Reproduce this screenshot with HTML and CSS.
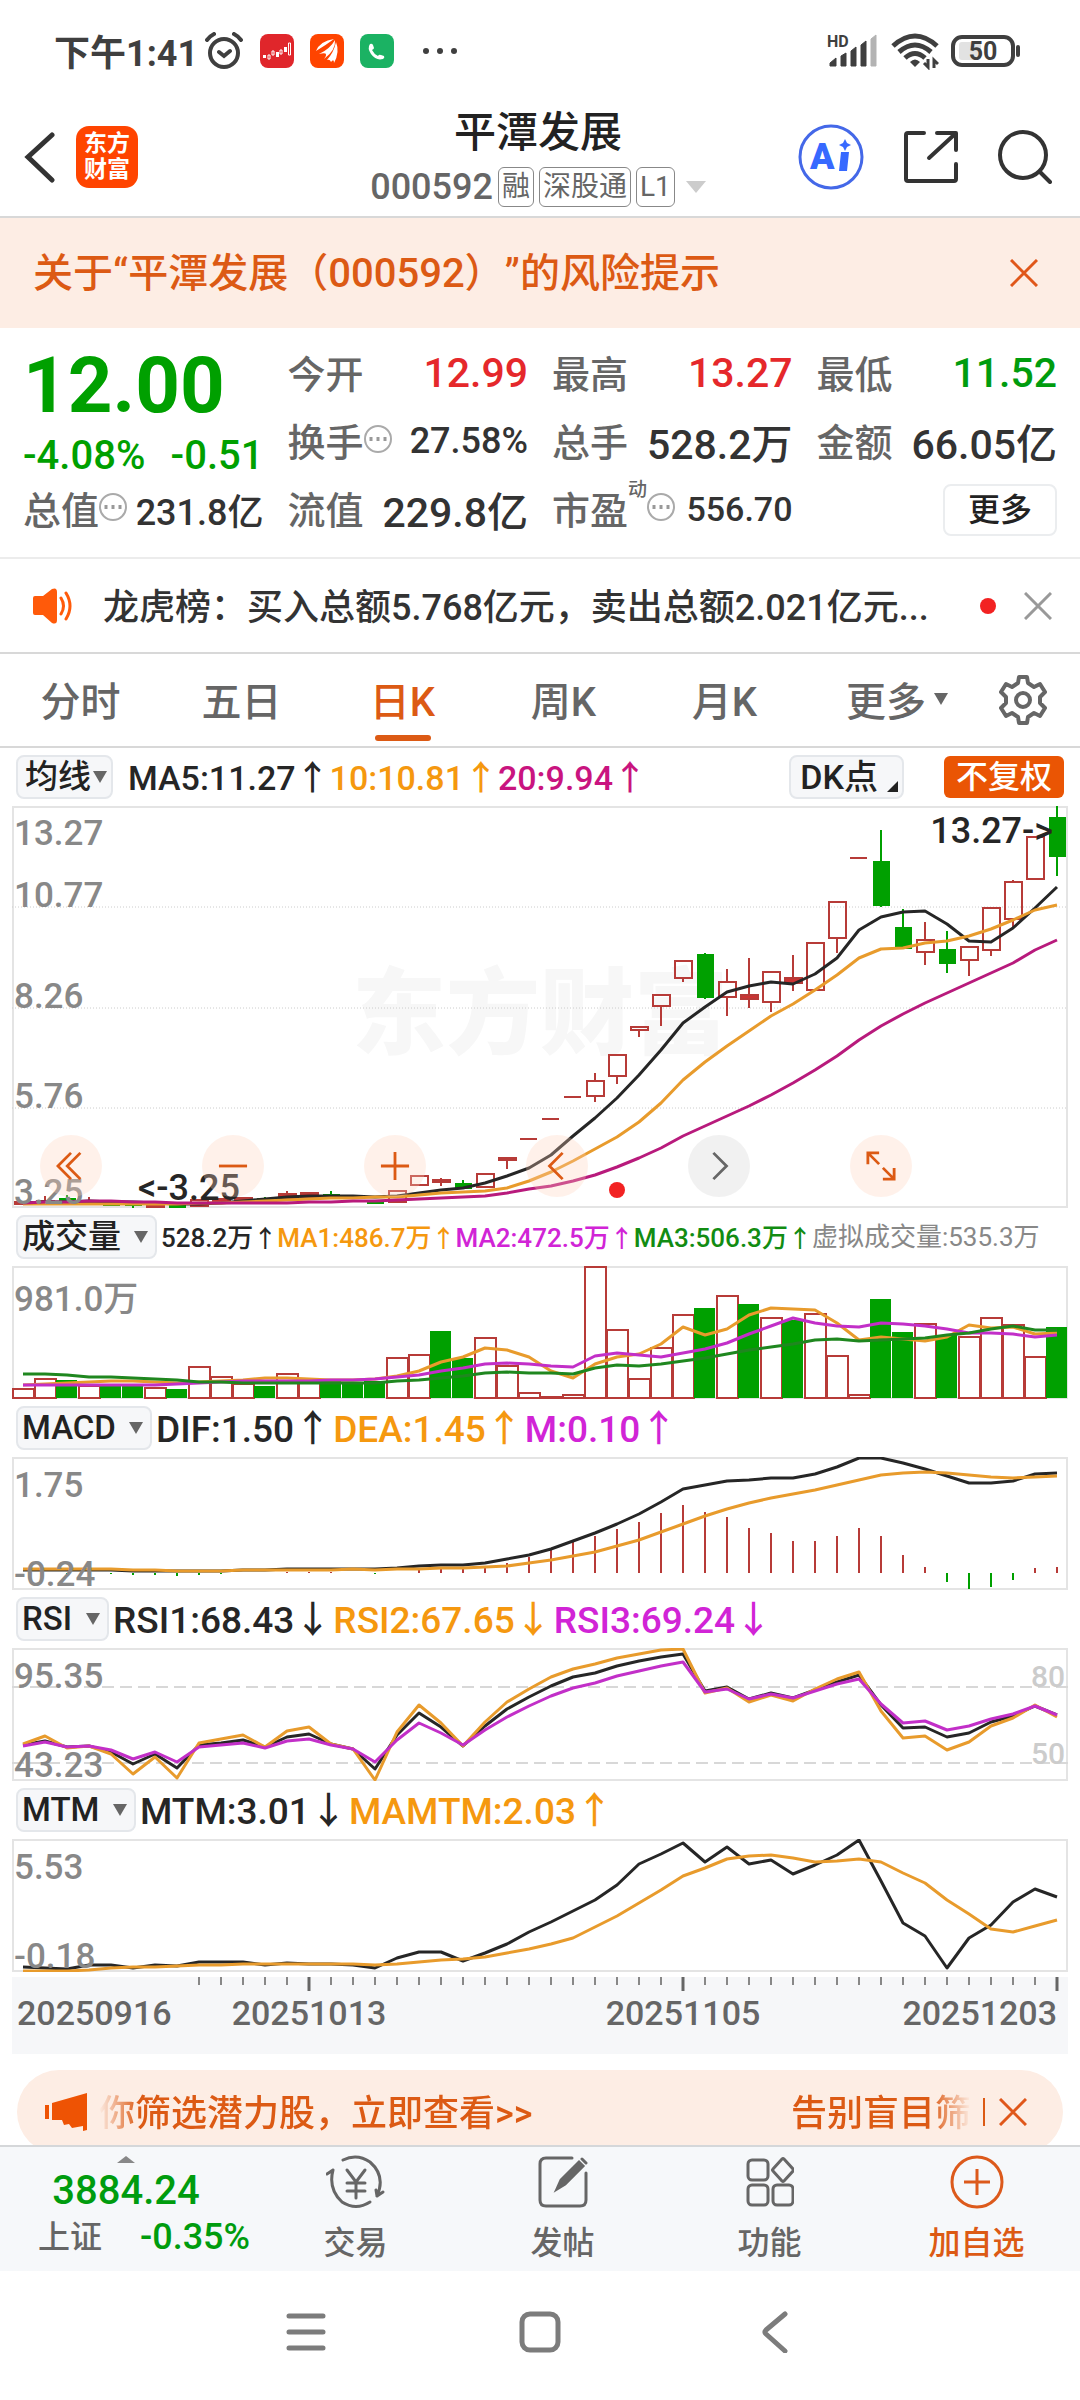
FILE: index.html
```html
<!DOCTYPE html>
<html lang="zh-CN">
<head>
    <meta charset="UTF-8">
    <meta name="viewport" content="width=device-width, initial-scale=1.0">
    <title>平潭发展 000592</title>
    <link rel="stylesheet" href="styles.css">
</head>
<body>
    <div class="status-bar">
        <div class="status-left">
            <span class="clock">下午1:41</span>
            <svg width="40" height="38" viewBox="0 0 40 38" fill="none" stroke="#3f3f3f" stroke-width="4" stroke-linecap="round">
                <circle cx="20" cy="21" r="14"/>
                <path d="M15 20l5 4 6-5M3 8q3-4 7-6M37 8q-3-4-7-6"/>
            </svg>
            <svg class="app-icon" width="34" height="34" viewBox="0 0 34 34">
                <rect width="34" height="34" rx="8" fill="#e0262b"/>
                <path d="M3 21h3v3H3zM16 18h3v5h-3zM24 13h3v5h-3z" fill="#fff"/>
                <path d="M8 21h2v4H8zM12 17h2v4h-2zM20 16h2v4h-2zM28.500 9h2v12h-2z" fill="none" stroke="#fff"/>
            </svg>
            <svg class="app-icon" width="34" height="34" viewBox="0 0 34 34">
                <rect width="34" height="34" rx="8" fill="#ff4400"/>
                <path d="M6 17Q10 7 24 5Q16 11 6 17zM9 20Q20 15 25 6Q26 16 14 25Q20 17 9 20zM17 26Q24 18 26 8Q30 18 24 29Q24 24 21 28Q20 25 17 26z" fill="#fff"/>
            </svg>
            <svg class="app-icon" width="34" height="34" viewBox="0 0 34 34">
                <rect width="34" height="34" rx="8" fill="#1bb263"/>
                <path d="M10 10q2-1 3 1l1 3q0 1-2 2q2 4 6 6q1-2 3-1l3 1q1 2-1 3q-7 2-12-5q-4-6-1-10z" fill="#fff"/>
            </svg>
            <svg class="dots" width="36" height="8" viewBox="0 0 36 8" fill="#3f3f3f">
                <circle cx="4" cy="4" r="3"/><circle cx="18" cy="4" r="3"/><circle cx="32" cy="4" r="3"/>
            </svg>
        </div>
        <div class="status-right">
            <svg width="52" height="36" viewBox="0 0 52 36" fill="#3f3f3f">
                <text class="hd" x="0" y="14">HD</text>
                <path d="M3 33v-3l6-5v8zM14 33V23l5-3v13zM24 33V18l5-4v19zM34 33V12l5-4v25z" stroke="#3f3f3f" stroke-linejoin="round"/>
                <path d="M44 33V6l5-4v31z" fill="#b3b3b3" stroke="#b3b3b3" stroke-linejoin="round"/>
            </svg>
            <svg width="48" height="38" viewBox="0 0 48 38" fill="none" stroke="#3f3f3f" stroke-width="5">
                <path d="M2 14Q24-6 46 14M8 20Q24 6 40 20M14 26Q24 17 34 26"/>
                <path d="M19 30q5-5 10 0l-5 5z" fill="#3f3f3f" stroke="none"/>
                <path d="M37 27v8l-4-4M43 36v-8l4 4" stroke-width="3"/>
            </svg>
            <svg width="70" height="32" viewBox="0 0 70 32" fill="none" stroke="#3f3f3f">
                <rect x="8" y="7" width="22" height="18" rx="3" fill="#e2e2e2" stroke="none"/>
                <rect x="2" y="2" width="60" height="28" rx="9" stroke-width="4"/>
                <path d="M67 12v8" stroke-width="4" stroke-linecap="round"/>
                <text class="battery" x="32" y="25">50</text>
            </svg>
        </div>
    </div>

    <header class="header">
        <div class="header-side">
            <a href="#" aria-label="返回">
                <svg width="32" height="52" viewBox="0 0 32 52" fill="none" stroke="#333" stroke-width="5" stroke-linecap="round"><path d="M28 4L4 26l24 23"/></svg>
            </a>
            <a class="logo" href="#"><span>东方</span><span>财富</span></a>
        </div>
        <div class="header-title">
            <h1>平潭发展</h1>
            <div class="code-row">
                <span class="code">000592</span>
                <span class="tag">融</span>
                <span class="tag">深股通</span>
                <span class="tag">L1</span>
                <span class="triangle light"></span>
            </div>
        </div>
        <div class="header-side header-right">
            <a href="#" aria-label="AI">
                <svg width="66" height="66" viewBox="0 0 66 66">
                    <circle cx="33" cy="33" r="31" fill="none" stroke="#4468e8" stroke-width="3"/>
                    <text class="ai" x="12" y="45">A</text>
                    <path d="M43 28h8l-2 19h-8zM47 15l2 4 4 2-4 2-2 4-2-4-4-2 4-2z" fill="#3769ff"/>
                </svg>
            </a>
            <a href="#" aria-label="分享">
                <svg width="54" height="54" viewBox="0 0 54 54" fill="none" stroke="#333" stroke-width="4" stroke-linecap="round" stroke-linejoin="round"><path d="M20 3H4q-2 0-2 2v44q0 2 2 2h46q2 0 2-2V34M33 3h19v17M51 4L25 28"/></svg>
            </a>
            <a href="#" aria-label="搜索">
                <svg width="54" height="54" viewBox="0 0 54 54" fill="none" stroke="#333" stroke-width="4" stroke-linecap="round"><circle cx="25" cy="25" r="23"/><path d="M42 42l10 10"/></svg>
            </a>
        </div>
    </header>

    <div class="risk-banner">
        <a href="#">关于“平潭发展（000592）”的风险提示</a>
        <button class="close" aria-label="关闭"><svg width="28" height="28" viewBox="0 0 28 28" fill="none" stroke="#e0571a" stroke-width="3"><path d="M1 1l26 26M27 1L1 27"/></svg></button>
    </div>

    <section class="quote">
        <div class="price-block">
            <strong class="price">12.00</strong>
            <div class="change"><span>-4.08%</span><span>-0.51</span></div>
        </div>
        <div class="stat"><span class="name">今开</span><span class="value up">12.99</span></div>
        <div class="stat"><span class="name">最高</span><span class="value up">13.27</span></div>
        <div class="stat"><span class="name">最低</span><span class="value down">11.52</span></div>
        <div class="stat"><span class="name">换手<i class="info"></i></span><span class="value small">27.58%</span></div>
        <div class="stat"><span class="name">总手</span><span class="value">528.2万</span></div>
        <div class="stat"><span class="name">金额</span><span class="value">66.05亿</span></div>
        <div class="stat"><span class="name">总值<i class="info"></i></span><span class="value small">231.8亿</span></div>
        <div class="stat"><span class="name">流值</span><span class="value">229.8亿</span></div>
        <div class="stat"><span class="name">市盈<sup>动</sup><i class="info"></i></span><span class="value tiny">556.70</span></div>
        <button class="more-btn">更多</button>
    </section>

    <div class="notice">
        <svg width="44" height="36" viewBox="0 0 44 36" fill="#ff5a0a">
            <path d="M2 10q0-2 2-2h8L21 1q5-2 5 3v28q0 5-5 3l-9-8H4q-2 0-2-2z"/>
            <path d="M30 10q5 8 0 16M35 5q8 13 0 26" fill="none" stroke="#ff5a0a" stroke-width="3" stroke-linecap="round"/>
        </svg>
        <a href="#">龙虎榜：买入总额5.768亿元，卖出总额2.021亿元...</a>
        <span class="red-dot"></span>
        <button class="close" aria-label="关闭"><svg width="28" height="28" viewBox="0 0 28 28" fill="none" stroke="#999" stroke-width="3"><path d="M1 1l26 26M27 1L1 27"/></svg></button>
    </div>

    <nav class="tabs">
        <a href="#">分时</a>
        <a href="#">五日</a>
        <a class="active" href="#">日K</a>
        <a href="#">周K</a>
        <a href="#">月K</a>
        <a class="more-tab" href="#">更多<span class="triangle tab-arrow"></span></a>
        <button class="gear" aria-label="设置">
            <svg width="48" height="50" viewBox="0 0 48 50" fill="none" stroke="#666" stroke-width="4" stroke-linejoin="round">
                <path d="M20 2h8l1 6 6 4 6-3 5 8-5 5v6l5 5-5 8-6-3-6 4-1 6h-8l-1-6-6-4-6 3-5-8 5-5v-6l-5-5 5-8 6 3 6-4z"/>
                <circle cx="24" cy="25" r="7"/>
            </svg>
        </button>
    </nav>

    <main class="charts">
        <div class="legend">
            <span class="picker tight"><select aria-label="主图指标"><option>均线</option></select></span>
            <div class="values">
                <span class="black">MA5:11.27<i>↑</i></span>
                <span class="orange">10:10.81<i>↑</i></span>
                <span class="pink">20:9.94<i>↑</i></span>
            </div>
            <button class="dk-btn">DK点</button>
            <button class="adjust-btn">不复权</button>
        </div>
        <div class="chart-box">
            <svg class="chart" viewBox="0 0 1056 402">
                <rect class="frame" x="1" y="1" width="1054" height="400"/>
                <text class="watermark" x="528" y="241">东方财富</text>
                <path class="dotted" d="M0 101h1056M0 202h1056M0 302h1056"/>
                <g id="kline"></g>
                <g class="scale">
                    <text x="2" y="39">13.27</text>
                    <text x="2" y="101">10.77</text>
                    <text x="2" y="202">8.26</text>
                    <text x="2" y="302">5.76</text>
                    <text x="2" y="398">3.25</text>
                </g>
                <g class="mark">
                    <text x="126" y="394">&lt;-3.25</text>
                    <text class="end" x="1041" y="37">13.27-&gt;</text>
                </g>
            </svg>
            <div class="chart-tools">
                <button aria-label="最左"><svg viewBox="0 0 32 32"><path d="M16 2L2 16l14 14M26 2L12 16l14 14"/></svg></button>
                <button aria-label="缩小"><svg viewBox="0 0 32 32"><path d="M1 16h30"/></svg></button>
                <button aria-label="放大"><svg viewBox="0 0 32 32"><path d="M1 16h30M16 1v30"/></svg></button>
                <button aria-label="左移"><svg viewBox="0 0 32 32"><path d="M22 2L8 16l14 14"/></svg></button>
                <button class="off" aria-label="右移"><svg viewBox="0 0 32 32"><path d="M10 2l14 14-14 14"/></svg></button>
                <button aria-label="全屏"><svg viewBox="0 0 32 32"><path d="M2 14V2h12M2 2l12 12M30 18v12H18M30 30L18 18"/></svg></button>
            </div>
            <span class="tool-dot red-dot"></span>
        </div>

        <div class="legend">
            <span class="picker"><select aria-label="副图指标一"><option>成交量</option></select></span>
            <div class="values dense">
                <span class="black">528.2万<i>↑</i></span>
                <span class="orange">MA1:486.7万<i>↑</i></span>
                <span class="purple">MA2:472.5万<i>↑</i></span>
                <span class="green">MA3:506.3万<i>↑</i></span>
                <span class="grey">虚拟成交量:535.3万</span>
            </div>
        </div>
        <svg class="chart" viewBox="0 0 1056 133">
            <rect class="frame" x="1" y="1" width="1054" height="131"/>
            <g id="volume"></g>
            <text class="scale" x="2" y="45">981.0万</text>
        </svg>

        <div class="legend">
            <span class="picker"><select aria-label="副图指标二"><option>MACD</option></select></span>
            <div class="values">
                <span class="black">DIF:1.50<i>↑</i></span>
                <span class="orange">DEA:1.45<i>↑</i></span>
                <span class="purple">M:0.10<i>↑</i></span>
            </div>
        </div>
        <svg class="chart" viewBox="0 0 1056 133">
            <rect class="frame" x="1" y="1" width="1054" height="131"/>
            <g id="macd"></g>
            <g class="scale"><text x="2" y="40">1.75</text><text x="2" y="129">-0.24</text></g>
        </svg>

        <div class="legend">
            <span class="picker"><select aria-label="副图指标三"><option>RSI</option></select></span>
            <div class="values">
                <span class="black">RSI1:68.43<i>↓</i></span>
                <span class="orange">RSI2:67.65<i>↓</i></span>
                <span class="purple">RSI3:69.24<i>↓</i></span>
            </div>
        </div>
        <svg class="chart" viewBox="0 0 1056 133">
            <rect class="frame" x="1" y="1" width="1054" height="131"/>
            <path class="dashed" d="M0 39h1056M0 115h1056"/>
            <g class="levels"><text x="1053" y="39">80</text><text x="1053" y="116">50</text></g>
            <g id="rsi"></g>
            <g class="scale"><text x="2" y="40">95.35</text><text x="2" y="129">43.23</text></g>
        </svg>

        <div class="legend">
            <span class="picker"><select aria-label="副图指标四"><option>MTM</option></select></span>
            <div class="values">
                <span class="black">MTM:3.01<i>↓</i></span>
                <span class="orange">MAMTM:2.03<i>↑</i></span>
            </div>
        </div>
        <svg class="chart" viewBox="0 0 1056 133">
            <rect class="frame" x="1" y="1" width="1054" height="131"/>
            <g id="mtm"></g>
            <g class="scale"><text x="2" y="40">5.53</text><text x="2" y="129">-0.18</text></g>
        </svg>

        <svg class="chart axis" viewBox="0 0 1056 77">
            <g id="ticks"></g>
            <text x="5" y="48">20250916</text>
            <text class="middle" x="297" y="48">20251013</text>
            <text class="middle" x="671" y="48">20251105</text>
            <text class="end" x="1045" y="48">20251203</text>
        </svg>
    </main>

    <div class="promo">
        <svg width="42" height="38" viewBox="0 0 42 38" fill="#ee5304">
            <path d="M0 12h4v14H0zM7 10L42 0v37l-4 1V33L27 35l-3-4-5 1-2-5H7z"/>
        </svg>
        <a class="promo-text" href="#"><span>你筛选潜力股，立即查看&gt;&gt;</span><span>告别盲目筛</span></a>
        <button class="close" aria-label="关闭"><svg width="28" height="28" viewBox="0 0 28 28" fill="none" stroke="#e0571a" stroke-width="3"><path d="M1 1l26 26M27 1L1 27"/></svg></button>
    </div>

    <footer class="bottom-nav">
        <a class="index" href="#">
            <span class="caret"></span>
            <span class="index-value">3884.24</span>
            <span class="index-row"><span>上证</span><span class="index-change">-0.35%</span></span>
        </a>
        <a href="#">
            <svg width="60" height="54" viewBox="0 0 60 54" fill="none" stroke="#666" stroke-width="3" stroke-linecap="round">
                <path d="M17 5Q31-2 44 7Q60 21 51 41M51 41l-1-6M51 41l6-4M44 47Q30 56 16 47Q2 34 7 15M7 15l-6 4"/>
                <path d="M21 15l9 12 9-12M21 28h18M21 36h18M30 27v16"/>
            </svg>
            交易
        </a>
        <a href="#">
            <svg width="50" height="54" viewBox="0 0 50 54" fill="none" stroke="#666" stroke-width="3" stroke-linecap="round">
                <path d="M34 3H8Q2 3 2 9v36q0 6 6 6h34q6 0 6-6V18"/>
                <path d="M19 34l4-9L41 7l4 4-18 18zM44 4l4 4" fill="#666"/>
            </svg>
            发帖
        </a>
        <a href="#">
            <svg width="48" height="54" viewBox="0 0 48 54" fill="none" stroke="#666" stroke-width="3">
                <rect x="2" y="5" width="20" height="20" rx="4"/>
                <rect x="2" y="30" width="20" height="20" rx="4"/>
                <rect x="27" y="30" width="20" height="20" rx="4"/>
                <path d="M36 4q1-1 2 0l9 10q1 1 0 2l-9 10q-1 1-2 0l-9-10q-1-1 0-2z"/>
            </svg>
            功能
        </a>
        <a class="add" href="#">
            <svg width="54" height="54" viewBox="0 0 54 54" fill="none" stroke="#dc5a1c" stroke-width="3"><circle cx="27" cy="27" r="25"/><path d="M14 27h26M27 14v26"/></svg>
            加自选
        </a>
    </footer>

    <div class="system-nav">
        <button aria-label="菜单"><svg width="40" height="40" viewBox="0 0 40 40" fill="none" stroke="#7c7c7c" stroke-width="5" stroke-linecap="round"><path d="M3 4h34M3 20h34M3 36h34"/></svg></button>
        <button aria-label="主页"><svg width="42" height="42" viewBox="0 0 42 42" fill="none" stroke="#7c7c7c" stroke-width="5"><rect x="3" y="3" width="36" height="36" rx="8"/></svg></button>
        <button aria-label="返回"><svg width="28" height="42" viewBox="0 0 28 42" fill="none" stroke="#7c7c7c" stroke-width="5" stroke-linecap="round" stroke-linejoin="round"><path d="M25 3L6 19q-2 2 0 4l19 17"/></svg></button>
    </div>

    <script src="script.js"></script>
</body>
</html>
```

FILE: styles.css
```css
* {
    box-sizing: border-box;
}
body {
    font-family: Roboto, 'Noto Sans CJK SC', sans-serif;
    font-weight: 500;
    text-spacing-trim: space-all;
    margin: 0;
    background: #fff;
    color: #333;
}
a {
    color: inherit;
    text-decoration: none;
}
button {
    font: inherit;
    color: inherit;
    background: none;
    border: none;
    padding: 0;
    cursor: pointer;
}
svg {
    display: block;
    flex: none;
}
i {
    font-style: normal;
}

/* Phone status bar */
.status-bar {
    display: flex;
    justify-content: space-between;
    align-items: center;
    height: 102px;
    padding: 0 59px 0 54px;
}
.status-left, .status-right {
    display: flex;
    align-items: center;
}
.clock {
    font-size: 36px;
    font-weight: 700;
    color: #3f3f3f;
    margin-right: 6px;
    padding-bottom: 2px;
}
.app-icon {
    margin-left: 16px;
}
.dots {
    margin-left: 28px;
}
.status-right {
    gap: 12px;
}
.hd {
    font-size: 16px;
    font-weight: 700;
}
.battery {
    font-size: 25px;
    font-weight: 700;
    text-anchor: middle;
    fill: #3f3f3f;
    stroke: none;
}

/* Header */
.header {
    display: flex;
    align-items: center;
    height: 116px;
    padding: 0 28px 4px 24px;
    border-bottom: 2px solid #d8d8d8;
}
.header-side {
    flex: 1;
    display: flex;
    align-items: center;
    gap: 20px;
}
.header-right {
    justify-content: flex-end;
    gap: 40px;
}
.logo {
    display: flex;
    flex-direction: column;
    align-items: center;
    justify-content: center;
    width: 62px;
    height: 62px;
    border-radius: 13px;
    background: #ff4400;
    color: #fff;
    font-size: 23px;
    line-height: 26px;
    font-weight: 700;
}
.header-title {
    text-align: center;
}
.header-title h1 {
    margin: 0 0 4px;
    font-size: 42px;
    line-height: 56px;
    font-weight: 500;
    color: #222;
}
.code-row {
    display: flex;
    align-items: center;
    justify-content: center;
    gap: 5px;
    color: #666;
}
.code {
    font-size: 36px;
    line-height: 44px;
}
.tag {
    font-size: 28px;
    line-height: 38px;
    padding: 0 3px;
    border: 1px solid #888;
    border-radius: 6px;
    font-weight: 400;
}
.triangle {
    display: inline-block;
    border: 8px solid transparent;
    border-top: 14px solid #666;
    border-bottom: 0;
}
.triangle.light {
    margin-left: 6px;
    border-width: 12px 10px 0;
    border-top-color: #ccc;
}
.ai {
    font-size: 36px;
    font-weight: 900;
    fill: #3769ff;
}

.risk-banner {
    display: flex;
    align-items: center;
    justify-content: space-between;
    height: 110px;
    padding: 0 42px 0 33px;
    background: #fdede4;
    color: #dc5a14;
    font-size: 40px;
}
.risk-banner a {
    padding-bottom: 6px;
}

/* Quote figures */
.quote {
    display: grid;
    grid-template-columns: repeat(4, 1fr);
    grid-auto-rows: 68px;
    column-gap: 24px;
    padding: 12px 23px 13px;
    border-bottom: 2px solid #ececec;
    align-items: center;
}
.price-block {
    grid-row: span 2;
    padding-top: 12px;
    color: #00a000;
}
.price {
    display: block;
    font-size: 78px;
    line-height: 84px;
    font-weight: 700;
}
.change {
    display: flex;
    justify-content: space-between;
    font-size: 40px;
    line-height: 56px;
}
.stat {
    display: flex;
    align-items: center;
    justify-content: space-between;
    padding-bottom: 2px;
    white-space: nowrap;
}
.name {
    display: flex;
    align-items: center;
    padding-bottom: 4px;
    font-size: 38px;
    color: #666;
}
.name sup {
    font-size: 19px;
    line-height: 20px;
    align-self: flex-start;
}
.info {
    width: 28px;
    height: 28px;
    border: 2px solid #aaa;
    border-radius: 50%;
    background: radial-gradient(circle, #999 2px, transparent 2px) center / 7px 24px;
}
.value {
    font-size: 41px;
}
.value.small {
    font-size: 36px;
}
.value.tiny {
    font-size: 34px;
}
.up {
    color: #e5282b;
}
.down {
    color: #009c0e;
}
.more-btn {
    justify-self: end;
    width: 114px;
    height: 52px;
    border: 2px solid #ebedef;
    border-radius: 8px;
    font-size: 32px;
    line-height: 44px;
    color: #222;
}

.notice {
    display: flex;
    align-items: center;
    height: 95px;
    padding: 0 28px 0 31px;
    border-bottom: 2px solid #d8d8d8;
    font-size: 36px;
}
.notice a {
    flex: 1;
    margin-left: 28px;
    padding-bottom: 4px;
    white-space: nowrap;
}
.red-dot {
    width: 16px;
    height: 16px;
    border-radius: 50%;
    background: #f22222;
}
.notice .close {
    margin-left: 28px;
}

/* Period tabs */
.tabs {
    display: flex;
    height: 94px;
    border-bottom: 2px solid #d8d8d8;
    color: #666;
    font-size: 40px;
}
.tabs a {
    flex: 1;
    display: flex;
    align-items: center;
    justify-content: center;
    position: relative;
    padding-bottom: 2px;
    white-space: nowrap;
}
.tabs .more-tab {
    justify-content: flex-end;
}
.tabs .active {
    color: #dc5a14;
}
.tabs .active::after {
    content: '';
    position: absolute;
    bottom: 5px;
    width: 56px;
    height: 6px;
    border-radius: 3px;
    background: #dc5a14;
}
.tab-arrow {
    margin: 0 18px 0 8px;
    border-width: 12px 7px 0;
}
.gear {
    width: 114px;
    display: flex;
    align-items: center;
    justify-content: center;
}

/* Charts */
.charts {
    padding: 0 12px;
}
.legend {
    display: flex;
    align-items: center;
    height: 58px;
    padding-left: 4px;
}
.picker {
    position: relative;
    flex: none;
}
.picker select {
    display: block;
    appearance: none;
    height: 44px;
    padding: 0 34px 0 4px;
    border: 2px solid #e4e7eb;
    border-radius: 8px;
    background: #f6f7f9;
    font: inherit;
    font-size: 33px;
    line-height: 40px;
    color: #222;
}
.picker.tight select {
    padding: 0 20px 0 7px;
}
.picker::after {
    content: '';
    position: absolute;
    right: 9px;
    top: 16px;
    border: 7px solid transparent;
    border-top: 12px solid #666;
    border-bottom: 0;
    pointer-events: none;
}
.picker.tight::after {
    right: 6px;
}
.values {
    flex: 1;
    display: flex;
    gap: 2px;
    padding-left: 4px;
    font-size: 37px;
    line-height: 44px;
    white-space: nowrap;
}
.tight + .values {
    gap: 0;
    padding-left: 15px;
    font-size: 34px;
}
.values.dense {
    gap: 0;
    font-size: 26px;
}
.values i {
    font-family: 'Noto Sans CJK SC', sans-serif;
}
.dense i {
    font-size: 24px;
}
.black {
    color: #262626;
}
.orange {
    color: #f5980f;
}
.pink {
    color: #c9147f;
}
.purple {
    color: #d124d6;
}
.green {
    color: #128c12;
}
.grey {
    color: #888;
    font-weight: 400;
}
.dk-btn {
    position: relative;
    height: 44px;
    padding: 0 24px 0 9px;
    margin-right: 40px;
    border: 2px solid #e4e7eb;
    border-radius: 8px;
    background: #f6f7f9;
    font-size: 34px;
    line-height: 38px;
    color: #222;
}
.dk-btn::after {
    content: '';
    position: absolute;
    right: 4px;
    bottom: 5px;
    border-left: 11px solid transparent;
    border-bottom: 11px solid #222;
}
.adjust-btn {
    height: 42px;
    padding: 0 12px;
    margin-right: 4px;
    border-radius: 6px;
    background: #ea5504;
    color: #fff;
    font-size: 32px;
    line-height: 38px;
}
.chart-box {
    position: relative;
}
.chart {
    width: 100%;
    height: auto;
}
.frame {
    fill: none;
    stroke: #e4e4e4;
    stroke-width: 2;
}
.watermark {
    font-family: 'Noto Sans CJK SC', sans-serif;
    font-size: 94px;
    font-weight: 900;
    fill: #f7f7f7;
    text-anchor: middle;
}
.dotted {
    stroke: #ccc;
    stroke-dasharray: 1 2;
}
.dashed {
    stroke: #d8d8d8;
    stroke-width: 2;
    stroke-dasharray: 12 6;
}
.scale {
    fill: #888;
    font-size: 35px;
}
.mark {
    fill: #262626;
    font-size: 36px;
}
.end {
    text-anchor: end;
}
.middle {
    text-anchor: middle;
}
.levels {
    fill: #ccc;
    font-size: 30px;
    text-anchor: end;
}
.axis {
    margin-top: 5px;
    background: #f6f7f9;
    fill: #666;
    font-size: 34px;
}
.line {
    fill: none;
    stroke-width: 3;
    stroke-linejoin: round;
}
.line.black { stroke: #262626; }
.line.orange { stroke: #e89b2c; }
.line.pink { stroke: #b81a7c; }
.line.purple { stroke: #c22fc8; }
.line.green { stroke: #1f871f; }
.rise {
    fill: none;
    stroke: #b73b38;
    stroke-width: 2;
}
.rise.solid {
    fill: #c33;
}
.fall {
    fill: #00a000;
}
path.fall {
    stroke: #00a000;
    stroke-width: 2;
}
.tick {
    stroke: #888;
    stroke-width: 2;
}
.tick.major {
    stroke: #666;
    stroke-width: 3;
}

/* Floating zoom and pan buttons */
.chart-tools {
    position: absolute;
    left: 28px;
    right: 156px;
    bottom: 11px;
    display: flex;
    justify-content: space-between;
}
.chart-tools button {
    display: flex;
    align-items: center;
    justify-content: center;
    width: 62px;
    height: 62px;
    border-radius: 50%;
    background: rgba(255, 210, 184, 0.3);
}
.chart-tools svg {
    width: 30px;
    fill: none;
    stroke: #dc5a14;
    stroke-width: 3;
}
.chart-tools .off {
    background: rgba(210, 210, 210, 0.3);
}
.chart-tools .off svg {
    stroke: #666;
}
.tool-dot {
    position: absolute;
    right: 443px;
    bottom: 10px;
}

/* Promo strip, cut off by the bottom nav */
.promo {
    display: flex;
    align-items: center;
    height: 84px;
    margin: 16px 17px -9px;
    padding: 0 36px 0 28px;
    border-radius: 42px;
    background: #fdede4;
    color: #dc5a14;
    font-size: 36px;
}
.promo-text {
    flex: 1;
    display: flex;
    justify-content: space-between;
    margin: 0 12px;
    padding-bottom: 4px;
    overflow: hidden;
    white-space: nowrap;
    mask-image: linear-gradient(90deg, transparent, #000 40px, #000 calc(100% - 40px), transparent);
}
.promo .close {
    padding-left: 14px;
    border-left: 2px solid #dc5a14;
}

.bottom-nav {
    position: relative;
    display: flex;
    height: 126px;
    background: #f6f8fa;
    border-top: 2px solid #d5d7d9;
    color: #666;
    font-size: 32px;
    line-height: 44px;
}
.bottom-nav a {
    flex: 1;
    display: flex;
    flex-direction: column;
    align-items: center;
    gap: 12px;
    padding-top: 8px;
}
.bottom-nav .index {
    flex: none;
    width: 252px;
    gap: 0;
    padding: 9px 0 0;
}
.caret {
    border: 9px solid transparent;
    border-top: 0;
    border-bottom: 7px solid #888;
}
.index-value {
    color: #009c0e;
    font-size: 40px;
    line-height: 56px;
}
.index-row {
    display: flex;
    align-items: center;
    gap: 38px;
    padding-left: 36px;
    line-height: 36px;
}
.index-change {
    color: #009c0e;
    font-size: 36px;
}
.bottom-nav .add {
    color: #dc5a14;
}

.system-nav {
    display: flex;
    justify-content: center;
    align-items: center;
    gap: 192px;
    height: 122px;
}
.system-nav button {
    display: flex;
    justify-content: center;
    width: 42px;
}
```

FILE: script.js
```js
const STEP = 22;

// [kind, body top, body bottom, high, low], kind: r = hollow, f = filled red, g = green, d = dash
const candles = [
    ['f', 396, 398, 396, 398], ['f', 395, 397, 390, 398], ['g', 392, 395, 389, 395], ['f', 395, 397, 391, 397],
    ['g', 398, 400, 398, 400], ['g', 398, 400, 398, 402], ['f', 398, 401, 398, 401], ['g', 399, 402, 399, 402],
    ['r', 394, 400, 394, 400], ['f', 393, 396, 393, 396], ['f', 392, 394, 391, 394], ['g', 392, 394, 391, 394],
    ['f', 388, 392, 385, 392], ['f', 387, 391, 387, 391], ['g', 388, 391, 385, 391], ['f', 390, 392, 390, 392],
    ['g', 396, 398, 394, 398], ['r', 385, 396, 385, 396], ['r', 370, 379, 370, 379], ['f', 374, 376, 372, 380],
    ['g', 377, 383, 374, 383], ['r', 368, 381, 368, 381], ['r', 352, 354, 352, 363], ['d', 333],
    ['d', 313], ['d', 291], ['r', 275, 290, 267, 296], ['r', 249, 270, 249, 278],
    ['r', 221, 224, 221, 231], ['r', 189, 200, 189, 220], ['r', 155, 172, 155, 176], ['g', 148, 192, 147, 193],
    ['r', 176, 191, 163, 210], ['f', 189, 193, 152, 202], ['r', 166, 196, 166, 206], ['f', 172, 177, 149, 185],
    ['r', 137, 184, 137, 184], ['r', 96, 132, 96, 147], ['d', 52], ['g', 55, 100, 24, 101],
    ['g', 121, 143, 103, 143], ['r', 134, 146, 116, 159], ['g', 143, 158, 125, 167], ['r', 141, 154, 141, 170],
    ['r', 102, 144, 102, 150], ['r', 76, 113, 74, 121], ['r', 31, 73, 31, 73], ['g', 11, 51, 0, 70]
];

const ma5 = [397, 396, 396, 395, 396, 396, 397, 398, 398, 397, 395, 393, 391, 390, 390, 390, 391, 390, 387, 384, 382, 377, 370, 362, 349, 330, 312, 292, 269, 244, 217, 201, 186, 180, 176, 178, 168, 152, 124, 111, 106, 105, 118, 135, 136, 122, 102, 81];
const ma10 = [398, 398, 398, 398, 398, 398, 398, 398, 397, 397, 396, 395, 394, 393, 392, 392, 391, 391, 389, 387, 386, 385, 382, 375, 366, 355, 343, 331, 316, 297, 274, 256, 240, 225, 210, 198, 184, 169, 152, 143, 142, 137, 135, 130, 123, 114, 104, 99];
const ma20 = [397, 396, 396, 395, 395, 396, 396, 397, 397, 397, 397, 397, 397, 396, 396, 395, 395, 394, 393, 392, 391, 390, 387, 383, 380, 375, 369, 361, 352, 342, 330, 320, 310, 300, 289, 277, 264, 250, 234, 220, 208, 197, 187, 177, 167, 157, 144, 134];

const volKinds = 'rrgrggrgrrrgrrgggrrggrrrrrrrrrrgrgrgrrrggrgrrrrg';
const volTops = [123, 113, 114, 120, 119, 118, 122, 123, 101, 111, 118, 120, 108, 113, 114, 118, 115, 92, 89, 65, 92, 72, 100, 127, 131, 129, 1, 64, 113, 82, 49, 42, 30, 38, 52, 54, 48, 90, 129, 33, 66, 58, 69, 71, 52, 59, 91, 61];
const volMa1 = [119, 118, 117, 116, 115, 115, 116, 117, 116, 115, 114, 112, 112, 113, 114, 114, 113, 110, 105, 96, 91, 82, 84, 91, 105, 112, 98, 91, 88, 78, 61, 69, 63, 49, 42, 43, 44, 57, 74, 71, 73, 75, 71, 59, 62, 61, 68, 67];
const volMa2 = [119, 119, 119, 119, 119, 119, 119, 118, 117, 116, 115, 115, 115, 115, 114, 114, 113, 111, 109, 105, 102, 98, 97, 98, 100, 101, 90, 87, 89, 91, 87, 83, 77, 68, 60, 52, 57, 60, 61, 57, 58, 60, 63, 67, 67, 68, 71, 69];
const volMa3 = [108, 108, 109, 111, 111, 112, 113, 114, 116, 116, 117, 117, 117, 117, 117, 117, 117, 115, 114, 112, 110, 107, 106, 107, 107, 108, 102, 99, 100, 98, 95, 92, 88, 84, 81, 78, 74, 73, 75, 74, 73, 72, 69, 67, 63, 60, 64, 64];

const dif = [113, 113, 113, 113, 113, 114, 114, 114, 114, 114, 113, 113, 112, 112, 112, 112, 112, 111, 109, 108, 108, 106, 102, 98, 92, 84, 76, 67, 57, 45, 32, 28, 24, 23, 21, 21, 17, 10, 1, 1, 6, 12, 19, 26, 26, 24, 17, 16];
const dea = [112, 112, 112, 112, 112, 113, 113, 114, 114, 114, 113, 113, 113, 113, 113, 112, 113, 112, 112, 111, 111, 110, 109, 106, 103, 99, 95, 89, 83, 75, 67, 59, 52, 46, 41, 37, 33, 28, 23, 18, 16, 15, 16, 18, 20, 21, 20, 19];
const macdBars = [0, 0, 1, 1, 1, 2, 2, 3, 2, 1, 0, 0, -1, -1, -1, 0, 1, 0, -4, -5, -4, -6, -10, -16, -24, -31, -37, -44, -51, -60, -68, -61, -56, -45, -40, -32, -32, -37, -45, -37, -18, -6, 9, 16, 14, 7, -5, -6];

const rsi1 = [97, 93, 99, 98, 104, 116, 106, 120, 97, 95, 92, 99, 89, 86, 96, 101, 121, 87, 65, 79, 98, 78, 61, 49, 38, 29, 25, 18, 13, 9, 6, 43, 39, 51, 45, 50, 42, 34, 27, 57, 80, 79, 89, 85, 74, 68, 58, 67];
const rsi2 = [96, 88, 100, 98, 106, 126, 109, 130, 95, 91, 87, 99, 83, 79, 96, 101, 132, 84, 57, 75, 98, 74, 54, 41, 29, 21, 16, 10, 6, 2, 1, 45, 40, 54, 47, 53, 41, 31, 24, 63, 90, 88, 102, 94, 78, 70, 57, 69];
const rsi3 = [98, 94, 99, 98, 102, 111, 104, 114, 99, 97, 95, 100, 93, 91, 97, 101, 114, 92, 75, 85, 97, 82, 69, 58, 48, 40, 35, 28, 23, 18, 14, 44, 41, 51, 46, 50, 43, 36, 31, 56, 75, 73, 82, 78, 71, 66, 58, 67];

const mtm = [128, 129, 130, 126, 126, 129, 126, 127, 123, 123, 123, 126, 124, 125, 125, 126, 129, 119, 113, 113, 122, 114, 105, 93, 83, 72, 61, 46, 25, 15, 4, 23, 8, 25, 21, 35, 26, 16, 1, 42, 84, 97, 129, 99, 86, 63, 50, 58];
const mamtm = [132, 132, 132, 131, 129, 128, 128, 127, 126, 126, 125, 125, 125, 125, 125, 125, 126, 125, 123, 121, 120, 118, 114, 110, 105, 99, 88, 77, 64, 51, 37, 29, 20, 17, 16, 19, 23, 22, 20, 23, 34, 44, 61, 75, 90, 93, 87, 81];

function centerX(i) {
    return i * STEP + 11;
}

function line(values, color) {
    const points = values.map((y, i) => `${centerX(i)},${y}`).join(' ');
    return `<polyline class="line ${color}" points="${points}"/>`;
}

function drawCandle([kind, top, bottom, high, low], i) {
    const x = centerX(i);
    if (kind === 'd') {
        return `<path class="rise" d="M${x - 9} ${top}h17"/>`;
    }
    if (kind === 'g') {
        return `<path class="fall" d="M${x} ${high}V${low}"/>
            <rect class="fall" x="${x - 8}" y="${top}" width="17" height="${bottom - top}"/>`;
    }
    const solid = kind === 'f' ? ' solid' : '';
    return `<path class="rise" d="M${x} ${high}V${top}M${x} ${bottom}V${low}"/>
        <rect class="rise${solid}" x="${x - 8}" y="${top}" width="17" height="${bottom - top}"/>`;
}

function drawVolume(top, i) {
    if (volKinds[i] === 'g') {
        return `<rect class="fall" x="${i * STEP}" y="${top}" width="21" height="${132 - top}"/>`;
    }
    return `<rect class="rise" x="${i * STEP + 1}" y="${top}" width="21" height="${132 - top}"/>`;
}

function drawMacdBar(size, i) {
    return `<path class="${size > 0 ? 'fall' : 'rise'}" d="M${centerX(i)} 116v${size}"/>`;
}

function render(id, ...parts) {
    document.getElementById(id).innerHTML = parts.flat().join('');
}

render('kline', candles.map(drawCandle), line(ma5, 'black'), line(ma10, 'orange'), line(ma20, 'pink'));
render('volume', volTops.map(drawVolume), line(volMa1, 'orange'), line(volMa2, 'purple'), line(volMa3, 'green'));
render('macd', macdBars.map(drawMacdBar), line(dif, 'black'), line(dea, 'orange'));
render('rsi', line(rsi1, 'black'), line(rsi2, 'orange'), line(rsi3, 'purple'));
render('mtm', line(mtm, 'black'), line(mamtm, 'orange'));

// Date ticks, the longer ones mark the labelled days
let ticks = '';
for (let i = 8; i < 48; i++) {
    const major = i === 13 || i === 30 || i === 47;
    ticks += `<path class="tick${major ? ' major' : ''}" d="M${centerX(i)} 0v${major ? 14 : 8}"/>`;
}
render('ticks', ticks);
```
